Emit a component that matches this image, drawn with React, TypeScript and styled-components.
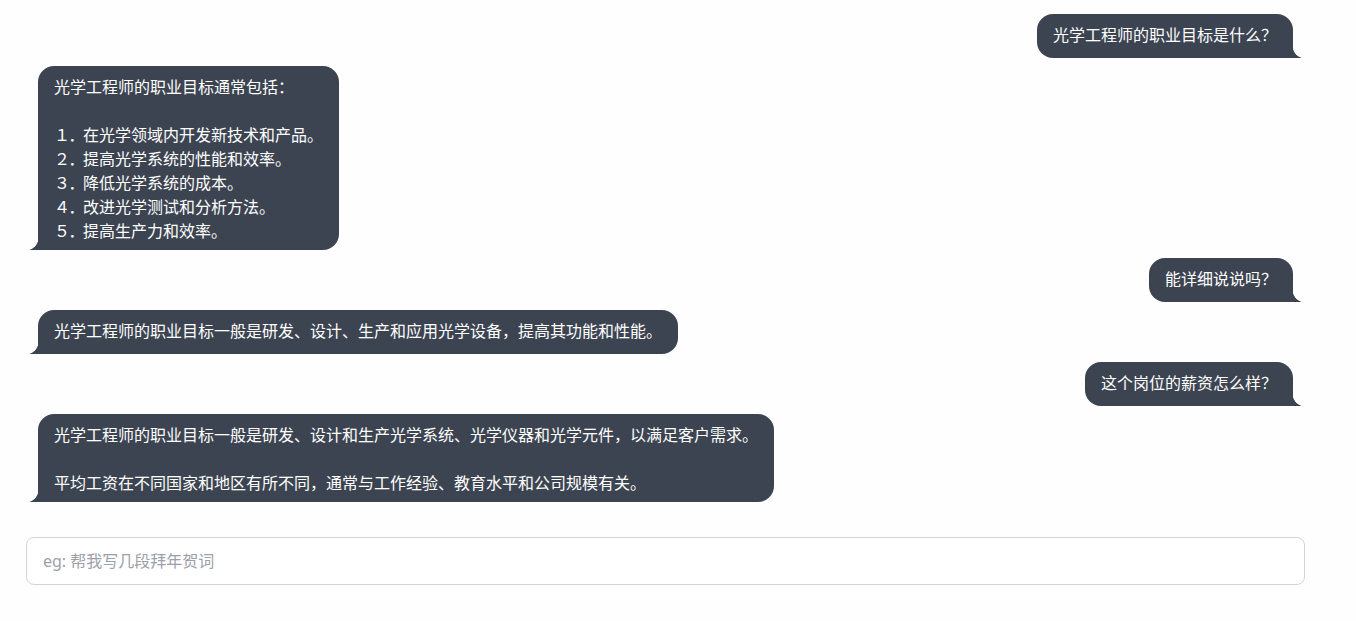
import styled, { createGlobalStyle, css } from 'styled-components';

const GlobalStyle = createGlobalStyle`
     html, body {
          margin: 0;
          padding: 0;
          background: #fefefe;
     }
     body {
          font-family: 'Noto Sans', 'Noto Sans CJK SC', sans-serif;
     }
`;

const Page = styled.div`
     height: 621px;
     box-sizing: border-box;
     padding: 10px 51px 0 26px;
     display: flex;
     flex-direction: column;
`;

const ChatList = styled.div`
     display: flex;
     flex-direction: column;
`;

const Row = styled.div<{ $mine?: boolean }>`
     display: flex;
     justify-content: ${(p) => (p.$mine ? 'flex-end' : 'flex-start')};
     padding: 4px 0;
`;

const BUBBLE = '#3d4451';

const Bubble = styled.div<{ $mine?: boolean }>`
     position: relative;
     box-sizing: border-box;
     min-height: 44px;
     padding: 8px 16px;
     background: ${BUBBLE};
     color: #ffffff;
     font-family: 'Noto Sans CJK SC', 'Noto Sans', sans-serif;
     font-size: 16px;
     line-height: 24px;
     white-space: pre-wrap;
     border-radius: 16px;
     &::before {
          content: '';
          position: absolute;
          bottom: 0;
          width: 12px;
          height: 12px;
     }
     ${(p) =>
          p.$mine
               ? css`
                      margin-right: 12px;
                      border-bottom-right-radius: 0;
                      &::before {
                           right: -12px;
                           background: radial-gradient(
                                circle at 100% 0,
                                transparent 12px,
                                ${BUBBLE} 12.6px
                           );
                      }
                 `
               : css`
                      margin-left: 12px;
                      border-bottom-left-radius: 0;
                      &::before {
                           left: -12px;
                           background: radial-gradient(
                                circle at 0 0,
                                transparent 12px,
                                ${BUBBLE} 12.6px
                           );
                      }
                 `}
`;

// numbered list marker, e.g. "１．", a bit narrower than two full-width glyphs
const Num = styled.span`
     display: inline-block;
     width: 29px;
     letter-spacing: -1.5px;
`;

const Composer = styled.div`
     margin-top: 31px;
`;

const Input = styled.input`
     box-sizing: border-box;
     width: 100%;
     height: 48px;
     padding: 0 16px;
     border: 1px solid #d3d4d8;
     border-radius: 8px;
     background: #ffffff;
     font-family: 'Noto Sans', 'Noto Sans CJK SC', sans-serif;
     font-size: 16px;
     color: #1f2937;
     outline: none;
     &::placeholder {
          color: #9ca0aa;
     }
`;

type Message = {
     mine: boolean;
     text: string;
};

const messages: Message[] = [
     { mine: true, text: '光学工程师的职业目标是什么？' },
     {
          mine: false,
          text: '光学工程师的职业目标通常包括：\n\n１．在光学领域内开发新技术和产品。\n２．提高光学系统的性能和效率。\n３．降低光学系统的成本。\n４．改进光学测试和分析方法。\n５．提高生产力和效率。',
     },
     { mine: true, text: '能详细说说吗？' },
     {
          mine: false,
          text: '光学工程师的职业目标一般是研发、设计、生产和应用光学设备，提高其功能和性能。',
     },
     { mine: true, text: '这个岗位的薪资怎么样？' },
     {
          mine: false,
          text: '光学工程师的职业目标一般是研发、设计和生产光学系统、光学仪器和光学元件，以满足客户需求。\n\n平均工资在不同国家和地区有所不同，通常与工作经验、教育水平和公司规模有关。',
     },
];

const renderText = (text: string) =>
     text.split('\n').map((line, i, all) => {
          const m = line.match(/^([１-９]．)(.*)$/);
          const end = i < all.length - 1 ? '\n' : '';
          return m ? (
               <span key={i}>
                    <Num>{m[1]}</Num>
                    {m[2] + end}
               </span>
          ) : (
               <span key={i}>{line + end}</span>
          );
     });

export default function App() {
     return (
          <>
               <GlobalStyle />
               <Page>
                    <ChatList>
                         {messages.map((m, i) => (
                              <Row key={i} $mine={m.mine}>
                                   <Bubble $mine={m.mine}>{renderText(m.text)}</Bubble>
                              </Row>
                         ))}
                    </ChatList>
                    <Composer>
                         <Input placeholder="eg: 帮我写几段拜年贺词" />
                    </Composer>
               </Page>
          </>
     );
}
